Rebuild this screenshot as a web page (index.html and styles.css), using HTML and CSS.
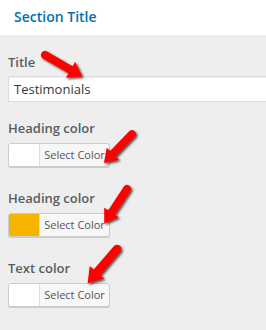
FILE: index.html
```html
<!DOCTYPE html>
<html>
<head>
<meta charset="utf-8">
<link rel="stylesheet" href="styles.css">
</head>
<body>
<div class="page">
  <div class="header">Section Title</div>
  <div class="panel">
    <div class="field field-text">
      <label class="label">Title</label>
      <div class="input">Testimonials</div>
    </div>
    <div class="field">
      <label class="label">Heading color</label>
      <div class="picker"><span class="swatch"></span><span class="btn">Select Color</span></div>
    </div>
    <div class="field">
      <label class="label">Heading color</label>
      <div class="picker"><span class="swatch yellow"></span><span class="btn">Select Color</span></div>
    </div>
    <div class="field">
      <label class="label">Text color</label>
      <div class="picker"><span class="swatch"></span><span class="btn">Select Color</span></div>
    </div>
  </div>
  <svg class="arrows" width="266" height="330" viewBox="0 0 266 330">
    <defs>
      <filter id="sh" x="-30%" y="-30%" width="160%" height="160%">
        <feDropShadow dx="1.5" dy="1.5" stdDeviation="1" flood-color="#000" flood-opacity="0.7"/>
      </filter>
      <path id="ar" d="M0,-4.5 L32,-4.5 L32,-10 L47,0 L32,10 L32,4.5 L0,4.5 A4.5,4.5 0 0 1 0,-4.5 Z"/>
    </defs>
    <g fill="#f00" filter="url(#sh)">
      <use href="#ar" transform="translate(45,55) rotate(30) scale(0.92)"/>
      <use href="#ar" transform="translate(132,134) rotate(134) scale(0.86)"/>
      <use href="#ar" transform="translate(127,189) rotate(123.3) scale(0.88)"/>
      <use href="#ar" transform="translate(117,249) rotate(130.6) scale(0.96)"/>
    </g>
  </svg>
</div>
</body>
</html>
```
FILE: styles.css
```css
html, body {
  margin: 0;
  padding: 0;
}
body {
  background: #eeeeee;
  font-family: "Open Sans", "Noto Sans", sans-serif;
  overflow: hidden;
}
.page {
  position: relative;
  width: 266px;
  height: 330px;
  overflow: hidden;
}
.header {
  background: #fff;
  height: 35px;
  line-height: 33px;
  padding-left: 14px;
  color: #0073aa;
  font-size: 14px;
  font-weight: 600;
}
.panel {
  padding: 17px 0 0 8px;
  display: flex;
  flex-direction: column;
  gap: 21px;
}
.field {
  display: flex;
  flex-direction: column;
  gap: 5px;
}
.field-text {
  gap: 4px;
  margin-bottom: -5px;
}
.label {
  font-size: 13px;
  font-weight: 600;
  color: #555d66;
  line-height: 20px;
}
.input {
  width: 270px;
  height: 26px;
  box-sizing: border-box;
  background: #fff;
  border: 1px solid #ddd;
  box-shadow: inset 0 1px 2px rgba(0,0,0,0.07);
  padding-left: 5px;
  font-size: 13px;
  line-height: 24px;
  color: #32373c;
}
.picker {
  display: flex;
  width: 102px;
  height: 24px;
  box-sizing: border-box;
  border: 1px solid #ccc;
  border-radius: 3px;
  box-shadow: 0 1px 0 #ccc;
  background: #f7f7f7;
  overflow: hidden;
}
.swatch {
  width: 30px;
  background: #fff;
  border-right: 1px solid #ddd;
}
.swatch.yellow {
  background: #f5b400;
}
.btn {
  flex: 1;
  text-align: center;
  font-size: 11px;
  line-height: 22px;
  color: #555;
}
.arrows {
  position: absolute;
  left: 0;
  top: 0;
}
```
